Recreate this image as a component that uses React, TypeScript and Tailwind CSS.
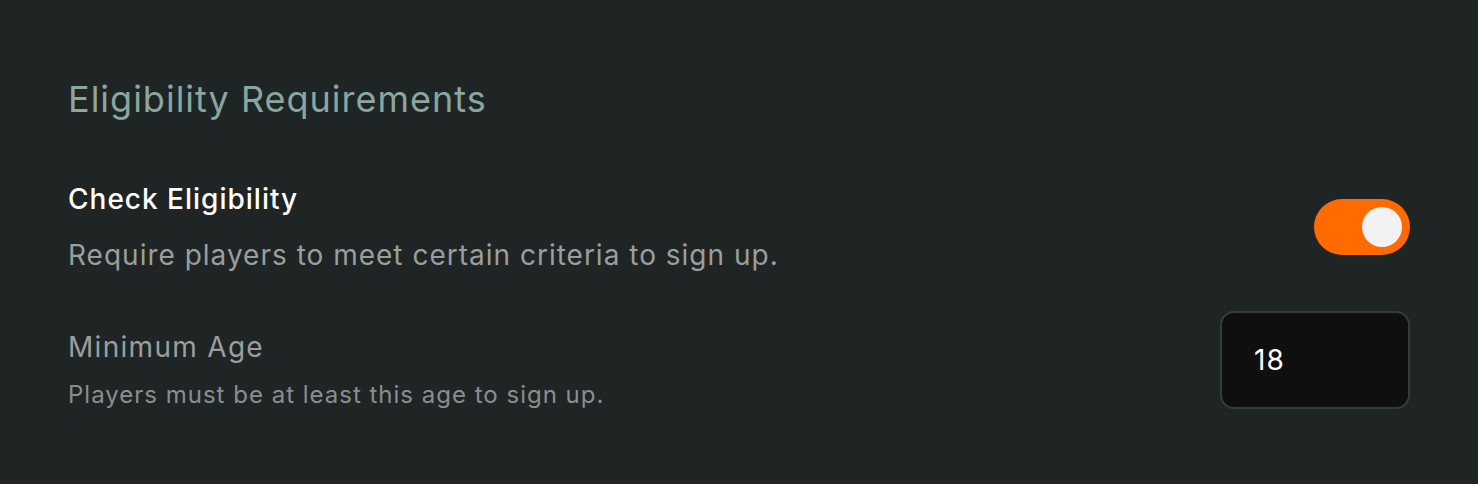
import React, { useState } from 'react';

const font = { fontFamily: 'Inter, "Noto Sans", sans-serif' };

export default function App() {
  const [enabled, setEnabled] = useState(true);
  const [age, setAge] = useState('18');

  return (
    <div className="min-h-[484px] w-full bg-[#1f2525] px-[68px] pt-[75px]" style={font}>
      <h2 className="text-[36px] leading-[48px] tracking-[1px] text-[#8ba69e]">Eligibility Requirements</h2>

      <div className="mt-[56px] flex items-center justify-between">
        <div>
          <div className="text-[28px] leading-[40px] font-medium tracking-[1px] text-white">Check Eligibility</div>
          <div className="mt-[16px] text-[28px] leading-[40px] tracking-[1px] text-[#9a9e9d]">
            Require players to meet certain criteria to sign up.
          </div>
        </div>
        <button
          onClick={() => setEnabled(!enabled)}
          className={
            'flex h-[56px] w-[96px] items-center rounded-full px-[8px] ' +
            (enabled ? 'justify-end bg-[#ff6b00]' : 'justify-start bg-[#3a3f3f]')
          }
        >
          <span className="h-[40px] w-[40px] rounded-full bg-[#f2f2f2]" />
        </button>
      </div>

      <div className="mt-[33px] flex items-center justify-between">
        <div className="pt-[19px]">
          <div className="text-[28px] leading-[40px] tracking-[1.3px] text-[#9a9e9d]">Minimum Age</div>
          <div className="mt-[11px] text-[24px] leading-[34px] tracking-[1px] text-[#8a8e8d]">
            Players must be at least this age to sign up.
          </div>
        </div>
        <input
          value={age}
          onChange={(e) => setAge(e.target.value)}
          className="h-[98px] w-[190px] rounded-[14px] border-2 border-[#363b3b] bg-[#0f0f0f] px-[32px] text-[28px] tracking-[1px] text-white outline-none"
        />
      </div>
    </div>
  );
}
